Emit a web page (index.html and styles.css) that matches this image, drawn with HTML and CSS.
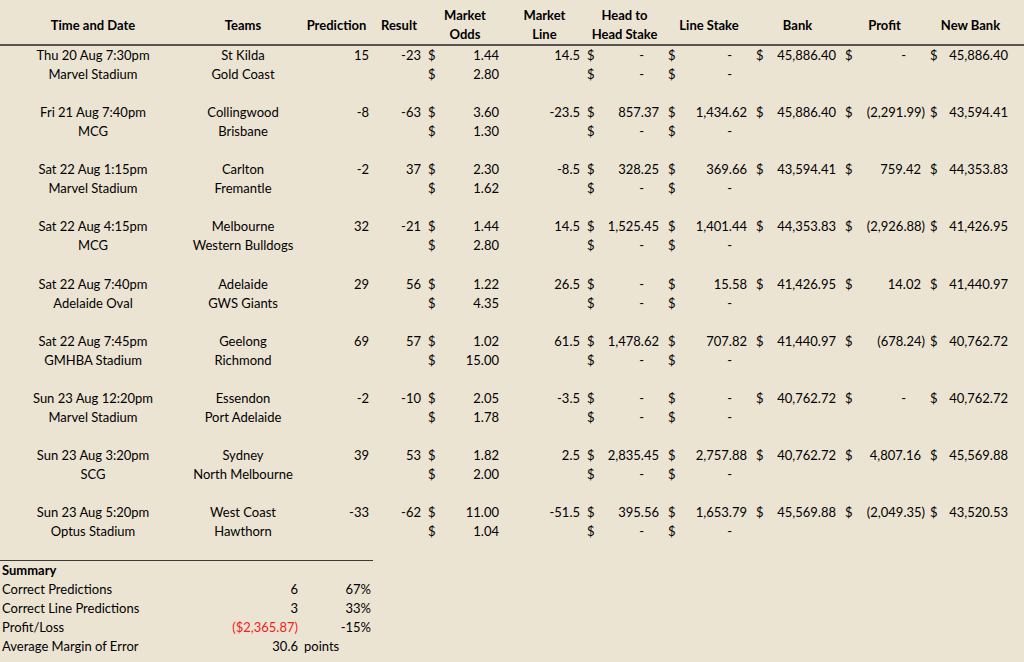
FILE: index.html
```html
<!DOCTYPE html>
<html>
<head>
<meta charset="utf-8">
<link rel="stylesheet" href="styles.css">
</head>
<body>
<div class="sheet">
  <div class="row head">
    <div class="h">Time and Date</div>
    <div class="h">Teams</div>
    <div class="h">Prediction</div>
    <div class="h">Result</div>
    <div class="h">Market<br>Odds</div>
    <div class="h">Market<br>Line</div>
    <div class="h">Head to<br>Head Stake</div>
    <div class="h">Line Stake</div>
    <div class="h">Bank</div>
    <div class="h">Profit</div>
    <div class="h">New Bank</div>
  </div>

  <div class="row game">
    <div class="c"><div>Thu 20 Aug 7:30pm</div><div>Marvel Stadium</div></div>
    <div class="c"><div>St Kilda</div><div>Gold Coast</div></div>
    <div class="r">15</div>
    <div class="r">-23</div>
    <div class="acc"><div class="al"><span>$</span><span class="v">1.44</span></div><div class="al"><span>$</span><span class="v">2.80</span></div></div>
    <div class="r">14.5</div>
    <div class="acc"><div class="al"><span>$</span><span class="z">-</span></div><div class="al"><span>$</span><span class="z">-</span></div></div>
    <div class="acc"><div class="al"><span>$</span><span class="z">-</span></div><div class="al"><span>$</span><span class="z">-</span></div></div>
    <div class="acc"><div class="al"><span>$</span><span class="v">45,886.40</span></div></div>
    <div class="acc"><div class="al"><span>$</span><span class="z">-</span></div></div>
    <div class="acc"><div class="al"><span>$</span><span class="v">45,886.40</span></div></div>
  </div>

  <div class="row game">
    <div class="c"><div>Fri 21 Aug 7:40pm</div><div>MCG</div></div>
    <div class="c"><div>Collingwood</div><div>Brisbane</div></div>
    <div class="r">-8</div>
    <div class="r">-63</div>
    <div class="acc"><div class="al"><span>$</span><span class="v">3.60</span></div><div class="al"><span>$</span><span class="v">1.30</span></div></div>
    <div class="r">-23.5</div>
    <div class="acc"><div class="al"><span>$</span><span class="v">857.37</span></div><div class="al"><span>$</span><span class="z">-</span></div></div>
    <div class="acc"><div class="al"><span>$</span><span class="v">1,434.62</span></div><div class="al"><span>$</span><span class="z">-</span></div></div>
    <div class="acc"><div class="al"><span>$</span><span class="v">45,886.40</span></div></div>
    <div class="acc"><div class="al"><span>$</span><span class="n">(2,291.99)</span></div></div>
    <div class="acc"><div class="al"><span>$</span><span class="v">43,594.41</span></div></div>
  </div>

  <div class="row game">
    <div class="c"><div>Sat 22 Aug 1:15pm</div><div>Marvel Stadium</div></div>
    <div class="c"><div>Carlton</div><div>Fremantle</div></div>
    <div class="r">-2</div>
    <div class="r">37</div>
    <div class="acc"><div class="al"><span>$</span><span class="v">2.30</span></div><div class="al"><span>$</span><span class="v">1.62</span></div></div>
    <div class="r">-8.5</div>
    <div class="acc"><div class="al"><span>$</span><span class="v">328.25</span></div><div class="al"><span>$</span><span class="z">-</span></div></div>
    <div class="acc"><div class="al"><span>$</span><span class="v">369.66</span></div><div class="al"><span>$</span><span class="z">-</span></div></div>
    <div class="acc"><div class="al"><span>$</span><span class="v">43,594.41</span></div></div>
    <div class="acc"><div class="al"><span>$</span><span class="v">759.42</span></div></div>
    <div class="acc"><div class="al"><span>$</span><span class="v">44,353.83</span></div></div>
  </div>

  <div class="row game">
    <div class="c"><div>Sat 22 Aug 4:15pm</div><div>MCG</div></div>
    <div class="c"><div>Melbourne</div><div>Western Bulldogs</div></div>
    <div class="r">32</div>
    <div class="r">-21</div>
    <div class="acc"><div class="al"><span>$</span><span class="v">1.44</span></div><div class="al"><span>$</span><span class="v">2.80</span></div></div>
    <div class="r">14.5</div>
    <div class="acc"><div class="al"><span>$</span><span class="v">1,525.45</span></div><div class="al"><span>$</span><span class="z">-</span></div></div>
    <div class="acc"><div class="al"><span>$</span><span class="v">1,401.44</span></div><div class="al"><span>$</span><span class="z">-</span></div></div>
    <div class="acc"><div class="al"><span>$</span><span class="v">44,353.83</span></div></div>
    <div class="acc"><div class="al"><span>$</span><span class="n">(2,926.88)</span></div></div>
    <div class="acc"><div class="al"><span>$</span><span class="v">41,426.95</span></div></div>
  </div>

  <div class="row game">
    <div class="c"><div>Sat 22 Aug 7:40pm</div><div>Adelaide Oval</div></div>
    <div class="c"><div>Adelaide</div><div>GWS Giants</div></div>
    <div class="r">29</div>
    <div class="r">56</div>
    <div class="acc"><div class="al"><span>$</span><span class="v">1.22</span></div><div class="al"><span>$</span><span class="v">4.35</span></div></div>
    <div class="r">26.5</div>
    <div class="acc"><div class="al"><span>$</span><span class="z">-</span></div><div class="al"><span>$</span><span class="z">-</span></div></div>
    <div class="acc"><div class="al"><span>$</span><span class="v">15.58</span></div><div class="al"><span>$</span><span class="z">-</span></div></div>
    <div class="acc"><div class="al"><span>$</span><span class="v">41,426.95</span></div></div>
    <div class="acc"><div class="al"><span>$</span><span class="v">14.02</span></div></div>
    <div class="acc"><div class="al"><span>$</span><span class="v">41,440.97</span></div></div>
  </div>

  <div class="row game">
    <div class="c"><div>Sat 22 Aug 7:45pm</div><div>GMHBA Stadium</div></div>
    <div class="c"><div>Geelong</div><div>Richmond</div></div>
    <div class="r">69</div>
    <div class="r">57</div>
    <div class="acc"><div class="al"><span>$</span><span class="v">1.02</span></div><div class="al"><span>$</span><span class="v">15.00</span></div></div>
    <div class="r">61.5</div>
    <div class="acc"><div class="al"><span>$</span><span class="v">1,478.62</span></div><div class="al"><span>$</span><span class="z">-</span></div></div>
    <div class="acc"><div class="al"><span>$</span><span class="v">707.82</span></div><div class="al"><span>$</span><span class="z">-</span></div></div>
    <div class="acc"><div class="al"><span>$</span><span class="v">41,440.97</span></div></div>
    <div class="acc"><div class="al"><span>$</span><span class="n">(678.24)</span></div></div>
    <div class="acc"><div class="al"><span>$</span><span class="v">40,762.72</span></div></div>
  </div>

  <div class="row game">
    <div class="c"><div>Sun 23 Aug 12:20pm</div><div>Marvel Stadium</div></div>
    <div class="c"><div>Essendon</div><div>Port Adelaide</div></div>
    <div class="r">-2</div>
    <div class="r">-10</div>
    <div class="acc"><div class="al"><span>$</span><span class="v">2.05</span></div><div class="al"><span>$</span><span class="v">1.78</span></div></div>
    <div class="r">-3.5</div>
    <div class="acc"><div class="al"><span>$</span><span class="z">-</span></div><div class="al"><span>$</span><span class="z">-</span></div></div>
    <div class="acc"><div class="al"><span>$</span><span class="z">-</span></div><div class="al"><span>$</span><span class="z">-</span></div></div>
    <div class="acc"><div class="al"><span>$</span><span class="v">40,762.72</span></div></div>
    <div class="acc"><div class="al"><span>$</span><span class="z">-</span></div></div>
    <div class="acc"><div class="al"><span>$</span><span class="v">40,762.72</span></div></div>
  </div>

  <div class="row game">
    <div class="c"><div>Sun 23 Aug 3:20pm</div><div>SCG</div></div>
    <div class="c"><div>Sydney</div><div>North Melbourne</div></div>
    <div class="r">39</div>
    <div class="r">53</div>
    <div class="acc"><div class="al"><span>$</span><span class="v">1.82</span></div><div class="al"><span>$</span><span class="v">2.00</span></div></div>
    <div class="r">2.5</div>
    <div class="acc"><div class="al"><span>$</span><span class="v">2,835.45</span></div><div class="al"><span>$</span><span class="z">-</span></div></div>
    <div class="acc"><div class="al"><span>$</span><span class="v">2,757.88</span></div><div class="al"><span>$</span><span class="z">-</span></div></div>
    <div class="acc"><div class="al"><span>$</span><span class="v">40,762.72</span></div></div>
    <div class="acc"><div class="al"><span>$</span><span class="v">4,807.16</span></div></div>
    <div class="acc"><div class="al"><span>$</span><span class="v">45,569.88</span></div></div>
  </div>

  <div class="row game">
    <div class="c"><div>Sun 23 Aug 5:20pm</div><div>Optus Stadium</div></div>
    <div class="c"><div>West Coast</div><div>Hawthorn</div></div>
    <div class="r">-33</div>
    <div class="r">-62</div>
    <div class="acc"><div class="al"><span>$</span><span class="v">11.00</span></div><div class="al"><span>$</span><span class="v">1.04</span></div></div>
    <div class="r">-51.5</div>
    <div class="acc"><div class="al"><span>$</span><span class="v">395.56</span></div><div class="al"><span>$</span><span class="z">-</span></div></div>
    <div class="acc"><div class="al"><span>$</span><span class="v">1,653.79</span></div><div class="al"><span>$</span><span class="z">-</span></div></div>
    <div class="acc"><div class="al"><span>$</span><span class="v">45,569.88</span></div></div>
    <div class="acc"><div class="al"><span>$</span><span class="n">(2,049.35)</span></div></div>
    <div class="acc"><div class="al"><span>$</span><span class="v">43,520.53</span></div></div>
  </div>

  <div class="summary">
    <div class="lbl b">Summary</div><div></div><div></div>
    <div class="lbl">Correct Predictions</div><div class="r">6</div><div class="r">67%</div>
    <div class="lbl">Correct Line Predictions</div><div class="r">3</div><div class="r">33%</div>
    <div class="lbl">Profit/Loss</div><div class="r red">($2,365.87)</div><div class="r">-15%</div>
    <div class="lbl">Average Margin of Error</div><div class="r">30.6</div><div class="l">points</div>
  </div>
</div>
</body>
</html>
```

FILE: styles.css
```css
html, body {
  margin: 0;
  padding: 0;
}
body {
  background: #ece4d3;
  color: #000;
  font-family: Lato, "Open Sans", sans-serif;
  font-size: 13px;
  line-height: 19.05px;
  width: 1024px;
  height: 662px;
  overflow: hidden;
}
.sheet {
  display: flex;
  flex-direction: column;
}
.row {
  display: grid;
  grid-template-columns: 186px 114px 73px 52px 80px 79px 81px 88px 89px 85px 87px;
}
.head {
  height: 38px;
  padding-top: 6px;
  border-bottom: 2px solid #57534d;
  font-weight: 700;
}
.h {
  display: flex;
  align-items: center;
  justify-content: center;
  text-align: center;
}
.game {
  padding-bottom: 19.05px;
  height: 38.1px;
}
.c {
  text-align: center;
}
.r {
  text-align: right;
  padding-right: 4px;
}
.acc {
  padding: 0 2px 0 3px;
}
.al {
  display: flex;
  justify-content: space-between;
}
.v {
  padding-right: 4px;
}
.z {
  padding-right: 19px;
}
.summary {
  width: 373px;
  border-top: 1px solid #3c3a36;
  display: grid;
  grid-template-columns: 186px 114px 73px;
}
.lbl {
  padding-left: 2px;
  white-space: nowrap;
}
.b {
  font-weight: 700;
}
.summary .r {
  padding-right: 2px;
}
.summary .l {
  padding-left: 4px;
}
.red {
  color: #f21d1d;
}
```
